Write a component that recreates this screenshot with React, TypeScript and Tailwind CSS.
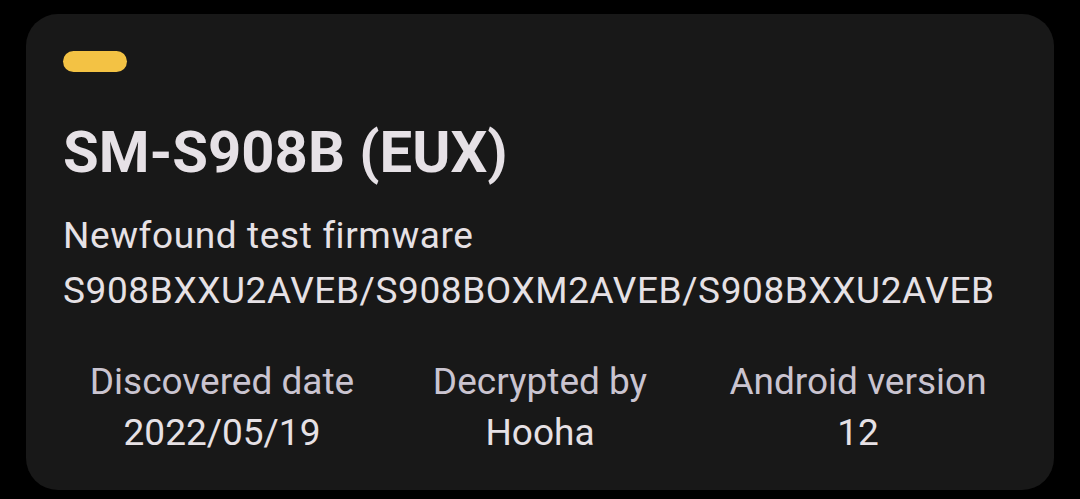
export default function App() {
  const stats = [
    { label: "Discovered date", value: "2022/05/19" },
    { label: "Decrypted by", value: "Hooha" },
    { label: "Android version", value: "12" },
  ];

  return (
    <div className="h-[499px] w-[1080px] bg-black pl-[26px] pt-[14px] font-['Roboto',sans-serif]">
      <div className="flex h-[476px] w-[1028px] flex-col rounded-[32px] bg-[#181818] px-[37px] pt-[37px]">
        <div className="h-[21px] w-[64px] rounded-full bg-[#f3c244]" />
        <h1 className="mt-[46px] text-[58px] font-bold leading-[68px] text-[#e6e1e6]">SM-S908B (EUX)</h1>
        <p className="mt-[22px] text-[37px] leading-[55px] tracking-[0.6px] text-[#e6e1e5]">
          Newfound test firmware
          <br />
          S908BXXU2AVEB/S908BOXM2AVEB/S908BXXU2AVEB
        </p>
        <div className="mt-[38px] grid grid-cols-3">
          {stats.map((s) => (
            <div key={s.label} className="flex flex-col items-center">
              <span className="text-[37px] leading-[52px] text-[#cac4d0]">{s.label}</span>
              <span className="text-[37px] leading-[50px] text-[#e6e1e5]">{s.value}</span>
            </div>
          ))}
        </div>
      </div>
    </div>
  );
}
